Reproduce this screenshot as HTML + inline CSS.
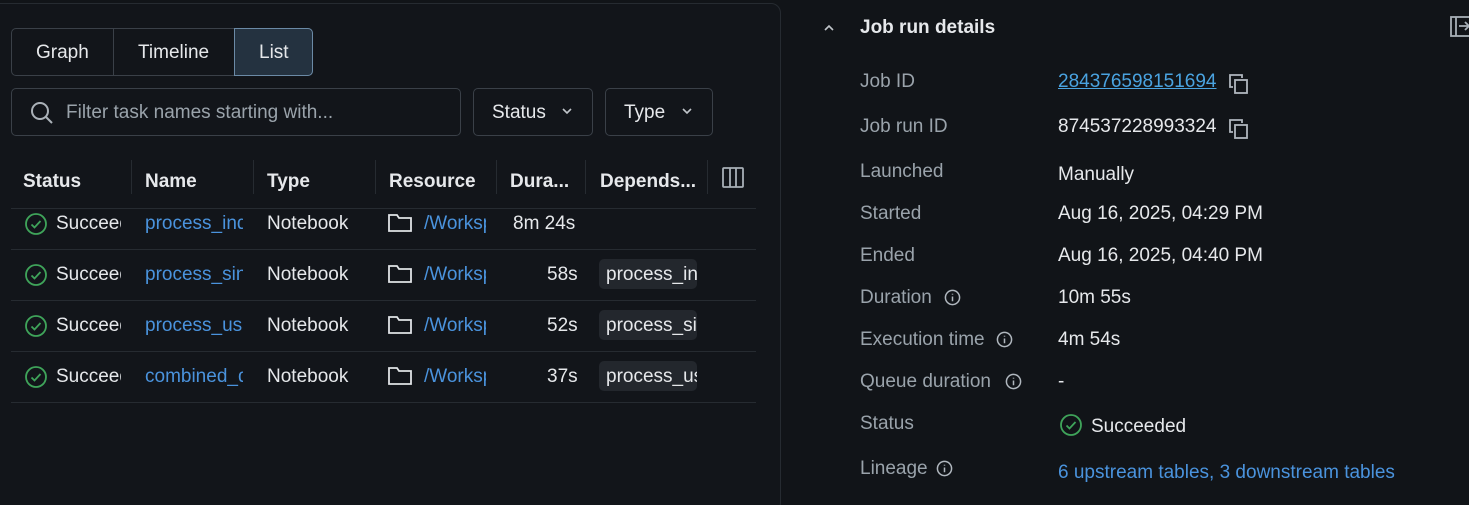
<!DOCTYPE html>
<html><head><meta charset="utf-8"><style>
*{margin:0;padding:0;box-sizing:border-box}
html,body{overflow:hidden}
body{width:1469px;height:505px;background:#111418;font-family:"Liberation Sans",sans-serif;color:#e6e8eb;font-size:19px;position:relative;overflow:hidden}
.a{position:absolute;white-space:nowrap}
.panel{position:absolute;left:-10px;top:3px;width:791px;height:510px;border:1px solid #262b31;border-radius:10px;background:#12151a}
.btn{position:absolute;border:1px solid #3a4048;border-radius:5px}
.lbl{color:#9aa3ab}
.lnk{color:#4a93dd}
.chip{position:absolute;left:599px;width:98px;height:30px;background:#23272d;border-radius:5px;overflow:hidden;padding:5px 0 0 7px;white-space:nowrap}
.row{position:absolute;left:11px;width:745px;height:1px;background:#262b31}
.clip{overflow:hidden}
</style></head><body>
<div class="panel"></div>
<div class="btn" style="left:11px;top:28px;width:302px;height:48px"></div>
<div class="a" style="left:113px;top:28px;width:1px;height:48px;background:#3a4048"></div>
<div class="a" style="left:234px;top:28px;width:79px;height:48px;background:#243240;border:1px solid #6b8aa6;border-radius:0 5px 5px 0"></div>
<div class="a" style="left:36px;top:42px">Graph</div>
<div class="a" style="left:138px;top:42px">Timeline</div>
<div class="a" style="left:259px;top:42px">List</div>
<div class="btn" style="left:11px;top:88px;width:450px;height:48px"></div>
<svg class="a" style="left:30px;top:101px" width="24" height="24" viewBox="0 0 24 24" fill="none" stroke="#aab1b8" stroke-width="2"><circle cx="10" cy="10" r="8"/><path d="M16 16l6 6"/></svg>
<div class="a lbl" style="left:66px;top:102px">Filter task names starting with...</div>
<div class="btn" style="left:473px;top:88px;width:120px;height:48px"></div>
<div class="a" style="left:492px;top:102px">Status</div>
<svg class="a" style="left:561px;top:107px" width="12" height="8" viewBox="0 0 12 8" fill="none" stroke="#c0c5ca" stroke-width="1.6"><path d="M2 2l4 4 4-4"/></svg>
<div class="btn" style="left:605px;top:88px;width:108px;height:48px"></div>
<div class="a" style="left:624px;top:102px">Type</div>
<svg class="a" style="left:681px;top:107px" width="12" height="8" viewBox="0 0 12 8" fill="none" stroke="#c0c5ca" stroke-width="1.6"><path d="M2 2l4 4 4-4"/></svg>
<div class="a" style="left:23px;top:171px;font-weight:bold">Status</div>
<div class="a" style="left:145px;top:171px;font-weight:bold">Name</div>
<div class="a" style="left:267px;top:171px;font-weight:bold">Type</div>
<div class="a" style="left:389px;top:171px;font-weight:bold">Resource</div>
<div class="a clip" style="left:510px;top:171px;font-weight:bold;width:64px">Dura...</div>
<div class="a clip" style="left:600px;top:171px;font-weight:bold;width:100px">Depends...</div>
<div class="a" style="left:131px;top:160px;width:1px;height:34px;background:#262b31"></div>
<div class="a" style="left:253px;top:160px;width:1px;height:34px;background:#262b31"></div>
<div class="a" style="left:375px;top:160px;width:1px;height:34px;background:#262b31"></div>
<div class="a" style="left:496px;top:160px;width:1px;height:34px;background:#262b31"></div>
<div class="a" style="left:585px;top:160px;width:1px;height:34px;background:#262b31"></div>
<div class="a" style="left:707px;top:160px;width:1px;height:34px;background:#262b31"></div>
<svg class="a" style="left:722px;top:167px" width="22" height="22" viewBox="0 0 22 22" fill="none" stroke="#a8b0b7" stroke-width="1.8"><rect x="1" y="1" width="20" height="19" rx="1"/><path d="M8 1v19M14 1v19"/></svg>
<div class="row" style="top:208px"></div>
<div class="row" style="top:249px"></div>
<div class="row" style="top:300px"></div>
<div class="row" style="top:351px"></div>
<div class="row" style="top:402px"></div>

<svg class="a" style="left:24px;top:212px" width="24" height="24" viewBox="0 0 24 24" fill="none" stroke="#3fa45a" stroke-width="1.8"><circle cx="12" cy="12" r="10"/><path d="M7.5 12.5l3 3 6-6.5"/></svg>
<div class="a clip" style="left:56px;top:213px;width:65px">Succeeded</div>
<div class="a clip lnk" style="left:145px;top:213px;width:98px">process_industry</div>
<div class="a" style="left:267px;top:213px">Notebook</div>
<svg class="a" style="left:387px;top:213px" width="26" height="20" viewBox="0 0 26 20" fill="none" stroke="#e0e3e6" stroke-width="1.8"><path d="M2 2h8l2 3h12v13H2z"/></svg>
<div class="a clip lnk" style="left:424px;top:213px;width:62px">/Workspace</div>
<div class="a" style="left:513px;top:213px">8m 24s</div>

<svg class="a" style="left:24px;top:263px" width="24" height="24" viewBox="0 0 24 24" fill="none" stroke="#3fa45a" stroke-width="1.8"><circle cx="12" cy="12" r="10"/><path d="M7.5 12.5l3 3 6-6.5"/></svg>
<div class="a clip" style="left:56px;top:264px;width:65px">Succeeded</div>
<div class="a clip lnk" style="left:145px;top:264px;width:98px">process_single</div>
<div class="a" style="left:267px;top:264px">Notebook</div>
<svg class="a" style="left:387px;top:264px" width="26" height="20" viewBox="0 0 26 20" fill="none" stroke="#e0e3e6" stroke-width="1.8"><path d="M2 2h8l2 3h12v13H2z"/></svg>
<div class="a clip lnk" style="left:424px;top:264px;width:62px">/Workspace</div>
<div class="a" style="left:547px;top:264px">58s</div>
<div class="chip" style="top:259px">process_industry</div>

<svg class="a" style="left:24px;top:314px" width="24" height="24" viewBox="0 0 24 24" fill="none" stroke="#3fa45a" stroke-width="1.8"><circle cx="12" cy="12" r="10"/><path d="M7.5 12.5l3 3 6-6.5"/></svg>
<div class="a clip" style="left:56px;top:315px;width:65px">Succeeded</div>
<div class="a clip lnk" style="left:145px;top:315px;width:98px">process_usage</div>
<div class="a" style="left:267px;top:315px">Notebook</div>
<svg class="a" style="left:387px;top:315px" width="26" height="20" viewBox="0 0 26 20" fill="none" stroke="#e0e3e6" stroke-width="1.8"><path d="M2 2h8l2 3h12v13H2z"/></svg>
<div class="a clip lnk" style="left:424px;top:315px;width:62px">/Workspace</div>
<div class="a" style="left:547px;top:315px">52s</div>
<div class="chip" style="top:310px">process_single</div>

<svg class="a" style="left:24px;top:365px" width="24" height="24" viewBox="0 0 24 24" fill="none" stroke="#3fa45a" stroke-width="1.8"><circle cx="12" cy="12" r="10"/><path d="M7.5 12.5l3 3 6-6.5"/></svg>
<div class="a clip" style="left:56px;top:366px;width:65px">Succeeded</div>
<div class="a clip lnk" style="left:145px;top:366px;width:98px">combined_data</div>
<div class="a" style="left:267px;top:366px">Notebook</div>
<svg class="a" style="left:387px;top:366px" width="26" height="20" viewBox="0 0 26 20" fill="none" stroke="#e0e3e6" stroke-width="1.8"><path d="M2 2h8l2 3h12v13H2z"/></svg>
<div class="a clip lnk" style="left:424px;top:366px;width:62px">/Workspace</div>
<div class="a" style="left:547px;top:366px">37s</div>
<div class="chip" style="top:361px">process_usage</div>

<svg class="a" style="left:822px;top:22px" width="14" height="12" viewBox="0 0 14 12" fill="none" stroke="#c0c5ca" stroke-width="1.6"><path d="M3 8l4-4 4 4"/></svg>
<div class="a" style="left:860px;top:17px;font-weight:bold">Job run details</div>
<svg class="a" style="left:1450px;top:16px" width="22" height="22" viewBox="0 0 22 22" fill="none" stroke="#a8b0b7" stroke-width="1.8"><rect x="1" y="1" width="24" height="19"/><path d="M6 1v19M9 10h10M15 6l4 4-4 4"/></svg>

<div class="a lbl" style="left:860px;top:71px">Job ID</div>
<div class="a" style="left:1058px;top:71px;color:#4aa3e0;text-decoration:underline">284376598151694</div>
<svg class="a" style="left:1228px;top:73px" width="22" height="22" viewBox="0 0 22 22" fill="none" stroke="#b0b7be" stroke-width="1.8"><path d="M5 14H2V2h12v3"/><rect x="7" y="7" width="12" height="13"/></svg>
<div class="a lbl" style="left:860px;top:116px">Job run ID</div>
<div class="a" style="left:1058px;top:116px">874537228993324</div>
<svg class="a" style="left:1228px;top:118px" width="22" height="22" viewBox="0 0 22 22" fill="none" stroke="#b0b7be" stroke-width="1.8"><path d="M5 14H2V2h12v3"/><rect x="7" y="7" width="12" height="13"/></svg>
<div class="a lbl" style="left:860px;top:161px">Launched</div>
<div class="a" style="left:1058px;top:164px">Manually</div>
<div class="a lbl" style="left:860px;top:203px">Started</div>
<div class="a" style="left:1058px;top:203px">Aug 16, 2025, 04:29 PM</div>
<div class="a lbl" style="left:860px;top:245px">Ended</div>
<div class="a" style="left:1058px;top:245px">Aug 16, 2025, 04:40 PM</div>
<div class="a lbl" style="left:860px;top:287px">Duration</div>
<div class="a" style="left:1058px;top:287px">10m 55s</div>
<div class="a lbl" style="left:860px;top:329px">Execution time</div>
<div class="a" style="left:1058px;top:329px">4m 54s</div>
<div class="a lbl" style="left:860px;top:371px">Queue duration</div>
<div class="a" style="left:1058px;top:371px">-</div>
<div class="a lbl" style="left:860px;top:413px">Status</div>
<svg class="a" style="left:1059px;top:413px" width="24" height="24" viewBox="0 0 24 24" fill="none" stroke="#3fa45a" stroke-width="1.8"><circle cx="12" cy="12" r="10"/><path d="M7.5 12.5l3 3 6-6.5"/></svg>
<div class="a" style="left:1091px;top:416px">Succeeded</div>
<div class="a lbl" style="left:860px;top:458px">Lineage</div>
<div class="a lnk" style="left:1058px;top:462px">6 upstream tables, 3 downstream tables</div>

<svg class="a" style="left:944px;top:289px" width="17" height="17" viewBox="0 0 18 18" fill="none" stroke="#b0b7be" stroke-width="1.6"><circle cx="9" cy="9" r="7.5"/><path d="M9 8v5M9 5v1"/></svg>
<svg class="a" style="left:996px;top:331px" width="17" height="17" viewBox="0 0 18 18" fill="none" stroke="#b0b7be" stroke-width="1.6"><circle cx="9" cy="9" r="7.5"/><path d="M9 8v5M9 5v1"/></svg>
<svg class="a" style="left:1005px;top:373px" width="17" height="17" viewBox="0 0 18 18" fill="none" stroke="#b0b7be" stroke-width="1.6"><circle cx="9" cy="9" r="7.5"/><path d="M9 8v5M9 5v1"/></svg>
<svg class="a" style="left:936px;top:460px" width="17" height="17" viewBox="0 0 18 18" fill="none" stroke="#b0b7be" stroke-width="1.6"><circle cx="9" cy="9" r="7.5"/><path d="M9 8v5M9 5v1"/></svg>
</body></html>
